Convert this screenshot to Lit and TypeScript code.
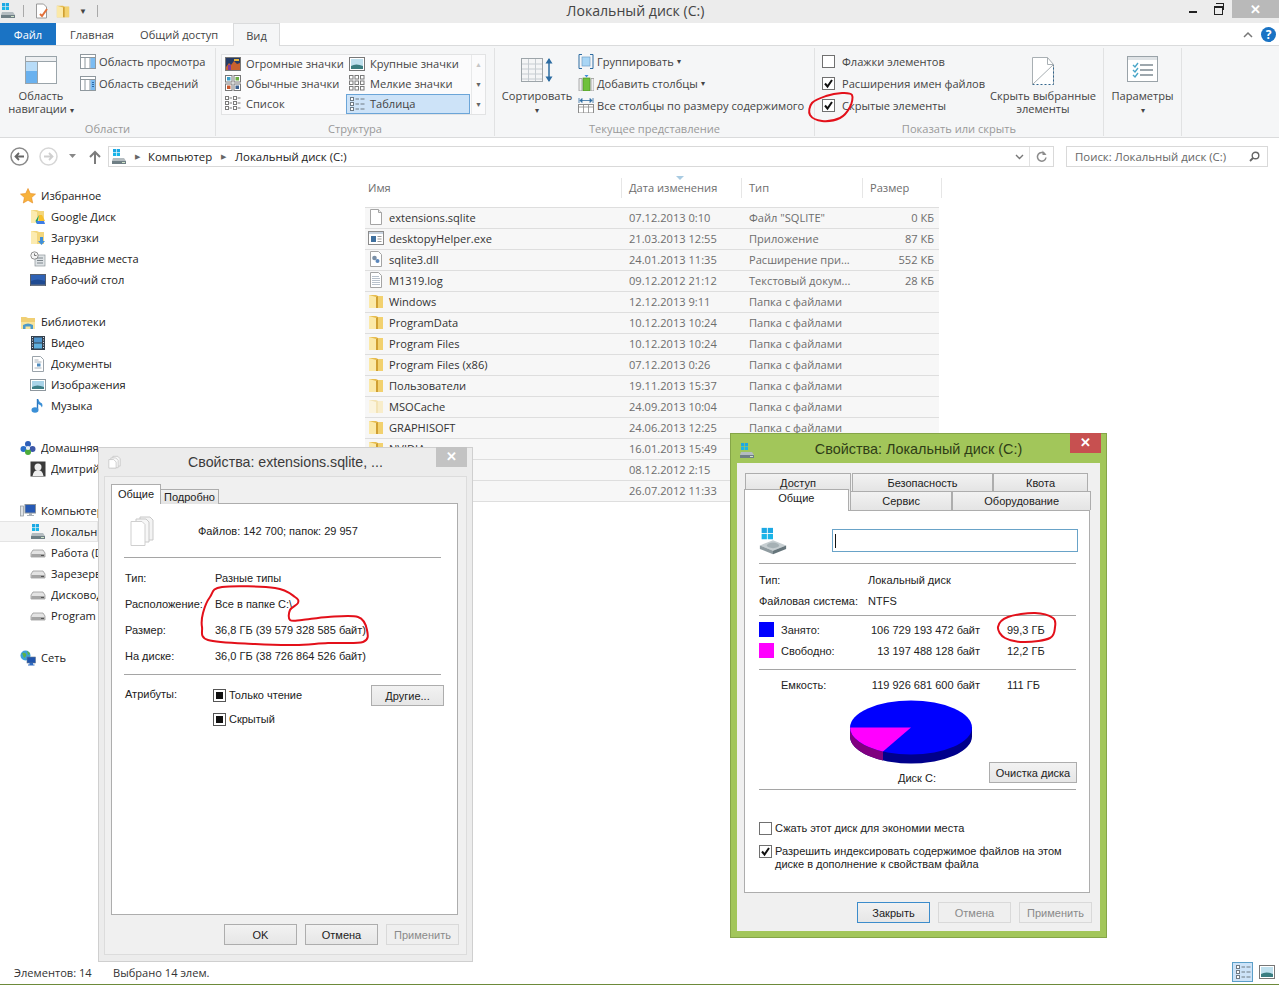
import { LitElement, html, css, svg } from "lit";
import { customElement } from "lit/decorators.js";

const smooth = (p: number[][]) => {
  const n = p.length;
  let d = `M${p[0][0]} ${p[0][1]}`;
  for (let i = 0; i < n; i++) {
    const a = p[(i - 1 + n) % n], b = p[i], c = p[(i + 1) % n], e = p[(i + 2) % n];
    d += `C${(b[0] + (c[0] - a[0]) / 6).toFixed(1)} ${(b[1] + (c[1] - a[1]) / 6).toFixed(1)} ${(c[0] - (e[0] - b[0]) / 6).toFixed(1)} ${(c[1] - (e[1] - b[1]) / 6).toFixed(1)} ${c[0]} ${c[1]}`;
  }
  return d + "Z";
};

const G: Record<string, any> = {
  drive: svg`<rect x="2" y="0" width="3.2" height="3.2" fill="#1ba8e4"/><rect x="5.8" y="0" width="3.2" height="3.2" fill="#1ba8e4"/><rect x="2" y="3.8" width="3.2" height="3.2" fill="#19b5e8"/><rect x="5.8" y="3.8" width="3.2" height="3.2" fill="#19b5e8"/><path d="M2 9h11l2 3v3H1v-3z" fill="#b4bcc0"/><rect x="1" y="12" width="14" height="3" fill="#6f7f85"/><rect x="11" y="13" width="3" height="1" fill="#cfe4c8"/>`,
  drivebig: svg`<rect x="1.500" y=".5" width="3" height="3" fill="#1ba8e4"/><rect x="5" y=".5" width="3" height="3" fill="#1ba8e4"/><rect x="1.500" y="4" width="3" height="3" fill="#19b5e8"/><rect x="5" y="4" width="3" height="3" fill="#19b5e8"/><path d="M.5 10.500L8 7.500 15.500 10.500 8 13.500z" fill="#c6ced1"/><path d="M.5 10.500L8 13.500v2L.5 12.500z" fill="#8f9ba0"/><path d="M15.500 10.500L8 13.500v2l7.500-3z" fill="#66757b"/><ellipse cx="8" cy="10.500" rx="3.500" ry="1.600" fill="#a6b1b5"/>`,
  hdd: svg`<path d="M3 5h10l2 3v4H1V8z" fill="#e3e3e3" stroke="#8d8d8d" stroke-width=".7"/><rect x="1.400" y="9" width="13.200" height="3" fill="#a5a5a5"/><rect x="11" y="10" width="3" height="1" fill="#555"/>`,
  doccheck: svg`<path d="M2.500 1h7l3 3v11h-10z" fill="#fff" stroke="#9a9a9a"/><path d="M6 11l2 2 5-7" fill="none" stroke="#e2703a" stroke-width="2"/>`,
  folder: svg`<path d="M1 2h7l2 1h5v12H1z" fill="#e7bd50"/><path d="M1 2l7 2v11H1z" fill="#fbe9a8"/><path d="M8 4l2-1v12H8z" fill="#cf9f32"/><rect x="10" y="3" width="5" height="12" fill="#f2d16f"/>`,
  folderfade: svg`<path d="M1 2h7l2 1h5v12H1z" fill="#f3e3b5"/><path d="M1 2l7 2v11H1z" fill="#fbf4de"/><rect x="10" y="3" width="5" height="12" fill="#f8edcb"/>`,
  file: svg`<path d="M2.500 .5h8l3 3v12h-11z" fill="#fff" stroke="#a4a4a4"/><path d="M10.500 .5v3h3" fill="#eee" stroke="#a4a4a4"/>`,
  exe: svg`<rect x=".5" y="1.500" width="15" height="13" fill="#fff" stroke="#8b8b8b"/><rect x="1" y="2" width="14" height="2" fill="#c9d4e0"/><rect x="3" y="6" width="5" height="6" fill="#3e6f9e"/><path d="M9.500 6.500h4M9.500 9h4M9.500 11.500h4" stroke="#999"/>`,
  dll: svg`<path d="M2.500 .5h8l3 3v12h-11z" fill="#fff" stroke="#a4a4a4"/><circle cx="6.500" cy="7" r="2.300" fill="#7a8fa6"/><circle cx="9.500" cy="10" r="2" fill="#5a86bb"/>`,
  log: svg`<path d="M2.500 .5h8l3 3v12h-11z" fill="#fff" stroke="#a4a4a4"/><path d="M4 4.500h7M4 6.500h8M4 8.500h8M4 10.500h8M4 12.500h8" stroke="#b9c2cc"/>`,
  star: svg`<path d="M8 .5l2.300 5 5.200.6-3.900 3.500 1.100 5.400L8 12.300 3.300 15l1.100-5.400L.5 6.100l5.200-.6z" fill="#f7b23c" stroke="#e58a20" stroke-width=".6"/>`,
  gdrive: svg`<path d="M1 1h6l2 1h5v12H1z" fill="#f3d67c"/><path d="M1 1l6 2v11H1z" fill="#fcebb0"/><path d="M9 6h3l3 6H9z" fill="#f6c02c"/><path d="M9 6l-3.500 6 1.500 3z" fill="#18a05e"/><path d="M7 15h8l-1-3H6z" fill="#3d7de6"/>`,
  download: svg`<path d="M1 1h6l2 1h5v12H1z" fill="#f3d67c"/><path d="M1 1l6 2v11H1z" fill="#fcebb0"/><path d="M10 7h3v4h2l-3.500 4L8 11h2z" fill="#3f8fd8"/>`,
  recent: svg`<rect x="5" y="4" width="10" height="11" fill="#dfe3e6" stroke="#8d9499" stroke-width=".7"/><path d="M7 7h6M7 9.500h6M7 12h6" stroke="#7d868c"/><circle cx="4.500" cy="4.500" r="3.700" fill="#f4f4f4" stroke="#777" stroke-width=".8"/><path d="M4.500 2.500v2h2" fill="none" stroke="#555" stroke-width=".8"/>`,
  desktop: svg`<rect x=".5" y="2.500" width="15" height="11" fill="#2f62b5" stroke="#555e6c"/><path d="M1 9q6-3 14 0v4H1z" fill="#1f4b92"/><rect x="1" y="12.500" width="14" height="1.500" fill="#6a7483"/>`,
  library: svg`<path d="M1 3h5l2 1h7v11H1z" fill="#f0cf74"/><path d="M1 8h14v7H1z" fill="#f8e49d"/><path d="M3 15v-4q5-3 10 0v4h-2.500v-2.500h-5V15z" fill="#4d9ac9"/>`,
  video: svg`<rect x="1" y="1" width="14" height="14" fill="#33414e"/><rect x="4" y="2.500" width="8" height="5" fill="#4e94cc"/><rect x="4" y="8.500" width="8" height="5" fill="#5fb0de"/><path d="M2 2.500h1M2 5h1M2 7.500h1M2 10h1M2 12.500h1M13 2.500h1M13 5h1M13 7.500h1M13 10h1M13 12.500h1" stroke="#dde"/>`,
  docs: svg`<path d="M2.500 .5h8l3 3v12h-11z" fill="#fff" stroke="#9aa3aa"/><path d="M4.500 4h4M4.500 6h7M4.500 12h7" stroke="#aab3ba"/><rect x="7" y="7.500" width="3.500" height="3" fill="#4f8bbd"/>`,
  images: svg`<rect x=".5" y="2.500" width="15" height="11" fill="#fff" stroke="#8e979e"/><rect x="2" y="4" width="12" height="8" fill="#a9d3e8"/><path d="M2 10q5-3 12 0v2H2z" fill="#3c7e86"/>`,
  music: svg`<path d="M7.500 1v10.500" stroke="#2c78c0" stroke-width="1.400"/><ellipse cx="5" cy="12" rx="3.500" ry="2.800" fill="#3a8fd6"/><path d="M8 1q1 3 4 4.500 1 1.500 0 4-1-3-4-3.500z" fill="#3a8fd6"/>`,
  home: svg`<circle cx="8" cy="4" r="3" fill="#2d5fb8"/><circle cx="3.500" cy="9" r="3" fill="#2a6fc9"/><circle cx="12.500" cy="9" r="3" fill="#3c57a8"/><circle cx="8" cy="12" r="3" fill="#4bab3a"/><circle cx="8" cy="8" r="2" fill="#e6eef6"/>`,
  user: svg`<rect x=".5" y=".5" width="15" height="15" fill="#3a3a3a"/><circle cx="8" cy="6" r="3.500" fill="#eee"/><path d="M2.500 15q1-6 5.500-6t5.500 6z" fill="#eee"/>`,
  computer: svg`<rect x="5" y="1.500" width="10.500" height="8.500" fill="#2659b5" stroke="#89939c"/><path d="M9 10h3v2h2v1H7v-1h2z" fill="#a9b1b8"/><rect x=".5" y="3" width="3" height="10" fill="#dfe3e6" stroke="#8b9298" stroke-width=".7"/>`,
  net: svg`<circle cx="5.500" cy="5.500" r="5" fill="#3ba0d8"/><path d="M2 3q3-1 4 1t-2 4zM7 1q3 1 3 3L8 5z" fill="#5cb24a"/><rect x="7" y="7" width="8.500" height="6" fill="#1f54ad" stroke="#687b8f" stroke-width=".6"/><path d="M9.500 13h3.500v1.500h1.500v1h-6.500v-1h1.500z" fill="#2f6bc2"/>`,
  navpane: svg`<rect x=".5" y=".5" width="31" height="27" fill="#fff" stroke="#9aa4aa"/><rect x="1" y="1" width="30" height="4.500" fill="#eef0f2"/><path d="M.5 5.500h31M12.500 5.500V27.500" stroke="#9aa4aa" fill="none"/><rect x="1" y="6" width="11" height="21" fill="#69b1ef"/><rect x="1" y="6" width="11" height="9" fill="#b8dcf8"/>`,
  preview: svg`<rect x=".5" y="1.500" width="15" height="14" fill="#fff" stroke="#8f989e"/><path d="M.5 4.500h15M5 4.500v11M10 4.500v11" stroke="#8f989e"/><rect x="10.500" y="5" width="4.500" height="10" fill="#7bbcf2"/>`,
  details: svg`<rect x=".5" y="1.500" width="15" height="14" fill="#fff" stroke="#8f989e"/><path d="M.5 4.500h15M5 4.500v11M10 4.500v11" stroke="#8f989e"/><rect x="10.500" y="5" width="4.500" height="10" fill="#7bbcf2"/><path d="M12 7.500h2M12 9.500h2M12 11.500h2" stroke="#2c6aa8"/>`,
  vhuge: svg`<rect x=".5" y="1.500" width="15" height="13" fill="#253a66" stroke="#777"/><path d="M1 11l3-4 2 2 3-4 3 3 3-1v7H1z" fill="#c8612f"/><rect x="3" y="9" width="3" height="5" fill="#7c3ba0"/><rect x="9" y="3" width="5" height="2" fill="#e7b73d"/>`,
  vlarge: svg`<rect x=".5" y="1.500" width="15" height="13" fill="#fff" stroke="#777"/><rect x="2" y="3" width="12" height="10" fill="#bfe0ee"/><path d="M2 10q5-3 12 0v3H2z" fill="#3a7d80"/>`,
  vmed: svg`<rect x=".5" y=".5" width="6.500" height="6.500" fill="#fff" stroke="#777"/><rect x="9" y=".5" width="6.500" height="6.500" fill="#fff" stroke="#777"/><rect x=".5" y="9" width="6.500" height="6.500" fill="#fff" stroke="#777"/><rect x="9" y="9" width="6.500" height="6.500" fill="#fff" stroke="#777"/><rect x="2" y="2" width="3.500" height="3.500" fill="#3b9ec9"/><rect x="10.500" y="2" width="3.500" height="3.500" fill="#6cae44"/><rect x="2" y="10.500" width="3.500" height="3.500" fill="#c9562a"/><rect x="10.500" y="10.500" width="3.500" height="3.500" fill="#3a5f8e"/>`,
  vsmall: svg`<g fill="#fff" stroke="#7b7b7b"><rect x=".5" y=".5" width="3.500" height="3.500"/><rect x="6" y=".5" width="3.500" height="3.500"/><rect x="11.500" y=".5" width="3.500" height="3.500"/><rect x=".5" y="6" width="3.500" height="3.500"/><rect x="6" y="6" width="3.500" height="3.500"/><rect x="11.500" y="6" width="3.500" height="3.500"/><rect x=".5" y="11.500" width="3.500" height="3.500"/><rect x="6" y="11.500" width="3.500" height="3.500"/><rect x="11.500" y="11.500" width="3.500" height="3.500"/></g>`,
  vlist: svg`<g fill="#fff" stroke="#7b7b7b"><rect x=".5" y="1.500" width="3" height="3"/><rect x=".5" y="6.500" width="3" height="3"/><rect x=".5" y="11.500" width="3" height="3"/><rect x="8.500" y="1.500" width="3" height="3"/><rect x="8.500" y="6.500" width="3" height="3"/><rect x="8.500" y="11.500" width="3" height="3"/></g><path d="M4.500 3h2.500M4.500 8h2.500M4.500 13h2.500M12.500 3h3M12.500 8h3M12.500 13h3" stroke="#7b7b7b"/>`,
  vtable: svg`<g fill="#fff" stroke="#6f7a83"><rect x="1.500" y="1.500" width="3" height="3"/><rect x="1.500" y="6.500" width="3" height="3"/><rect x="1.500" y="11.500" width="3" height="3"/></g><path d="M6.500 3h3.500M11.500 3h4M6.500 8h3.500M11.500 8h4M6.500 13h3.500M11.500 13h4" stroke="#6f7a83"/>`,
  sort: svg`<rect x=".5" y="2.500" width="21" height="23" fill="#f4f5f6" stroke="#9ca4a9"/><path d="M1 8h20M1 13h20M1 18h20M1 23h20M7.500 3v22M14.500 3v22" stroke="#c6ccd1"/><path d="M28 3v22" stroke="#2d6ca2" stroke-width="1.500"/><path d="M24.500 7.500L28 2l3.500 5.500zM24.500 20.500L28 26l3.500-5.500z" fill="#2d6ca2"/>`,
  group: svg`<path d="M4 1.500H1v14h3M12 1.500h3v14h-3" fill="none" stroke="#2d6ca2"/><rect x="4" y="4" width="8" height="9" fill="#a9d6f5" stroke="#6f9fc6" stroke-width=".7"/>`,
  addcol: svg`<rect x="5" y="3" width="7" height="13" fill="#6fc13b" stroke="#4b8f22" stroke-width=".7"/><path d="M1 3.500h3v12.500H1zM13 3.500h3v12.500h-3z" fill="#eee" stroke="#8c8c8c" stroke-width=".7"/><path d="M6.500 0h4L8.500 2.500z" fill="#3f8fd8"/>`,
  fitcol: svg`<path d="M1 1v5M15 1v5M2 3.500h12M2 3.500l2-2v4zM14 3.500l-2-2v4z" stroke="#2d6ca2" fill="#2d6ca2" stroke-width=".8"/><rect x=".5" y="7.500" width="15" height="8.500" fill="#fff" stroke="#8c8c8c"/><path d="M.5 10h15M5.500 7.500v8.500M10.500 7.500v8.500" stroke="#8c8c8c" stroke-width=".8"/>`,
  hide: svg`<path d="M1.500 27.500V.5h15l6 7v20" fill="#fff" stroke="#a8afb3"/><path d="M16.500 .5v7h6" fill="none" stroke="#a8afb3"/><path d="M1.500 27.500h21V8" fill="none" stroke="#33668e" stroke-dasharray="2 2"/><path d="M1.500 27.500L22 8" stroke="#a8afb3"/>`,
  params: svg`<rect x=".5" y=".5" width="30" height="25" fill="#fff" stroke="#9aa3a9"/><rect x="1" y="1" width="29" height="3" fill="#dfe3e6"/><path d="M13 9h13M13 14h13M13 19h13" stroke="#7e8a93" stroke-width="1.300"/><path d="M6 9l2 2 3-4M6 14l2 2 3-4M6 19l2 2 3-4" fill="none" stroke="#4aa6c8" stroke-width="1.400"/>`,
  stack: svg`<path d="M6 1h6l3 3v9H6z" fill="#f6f6f6" stroke="#c5c5c5"/><path d="M3.500 3h6l3 3v9h-9z" fill="#fafafa" stroke="#c5c5c5"/><path d="M1 5h6l3 3v7.500H1z" fill="#fff" stroke="#c5c5c5"/>`,
  stackbig: svg`<path d="M10 1h10l3 3v20H10z" fill="#f3f3f3" stroke="#c9c9c9"/><path d="M6 3h10l3 3v20H6z" fill="#f7f7f7" stroke="#c9c9c9"/><path d="M1 5.500h11l3 3v21H1z" fill="#fff" stroke="#cfcfcf"/>`,
};

const ic = (n: string, w = 16, h = 16, vb = "0 0 16 16") =>
  html`<svg class="ic" width=${w} height=${h} viewBox=${vb}>${G[n]}</svg>`;

const files = [
  ["file", "extensions.sqlite", "07.12.2013 0:10", 'Файл "SQLITE"', "0 КБ"],
  ["exe", "desktopyHelper.exe", "21.03.2013 12:55", "Приложение", "87 КБ"],
  ["dll", "sqlite3.dll", "24.01.2013 11:35", "Расширение при...", "552 КБ"],
  ["log", "M1319.log", "09.12.2012 21:12", "Текстовый докум...", "28 КБ"],
  ["folder", "Windows", "12.12.2013 9:11", "Папка с файлами", ""],
  ["folder", "ProgramData", "10.12.2013 10:24", "Папка с файлами", ""],
  ["folder", "Program Files", "10.12.2013 10:24", "Папка с файлами", ""],
  ["folder", "Program Files (x86)", "07.12.2013 0:26", "Папка с файлами", ""],
  ["folder", "Пользователи", "19.11.2013 15:37", "Папка с файлами", ""],
  ["folderfade", "MSOCache", "24.09.2013 10:04", "Папка с файлами", ""],
  ["folder", "GRAPHISOFT", "24.06.2013 12:25", "Папка с файлами", ""],
  ["folder", "NVIDIA", "16.01.2013 15:49", "", ""],
  ["", "", "08.12.2012 2:15", "", ""],
  ["", "", "26.07.2012 11:33", "", ""],
];

const nav: [string, string, number, boolean?][][] = [
  [["star", "Избранное", 0], ["gdrive", "Google Диск", 1], ["download", "Загрузки", 1], ["recent", "Недавние места", 1], ["desktop", "Рабочий стол", 1]],
  [["library", "Библиотеки", 0], ["video", "Видео", 1], ["docs", "Документы", 1], ["images", "Изображения", 1], ["music", "Музыка", 1]],
  [["home", "Домашняя группа", 0], ["user", "Дмитрий", 1]],
  [["computer", "Компьютер", 0], ["drive", "Локальный диск (C:)", 1, true], ["hdd", "Работа (D:)", 1], ["hdd", "Зарезервировано системой", 1], ["hdd", "Дисковод", 1], ["hdd", "Program Files", 1]],
  [["net", "Сеть", 0]],
];

const scribbles = [
  [[842,93],[826,96],[812,103],[810,115],[822,121],[840,118],[850,107],[852,95]],
  [[210,597],[222,587],[275,588],[295,597],[298,603],[290,610],[290,620],[302,620],[328,617],[358,617],[367,630],[363,642],[328,643],[295,645],[255,644],[208,640],[202,627],[203,613]],
  [[998,627],[1008,617],[1035,613],[1053,618],[1055,627],[1050,638],[1025,642],[1005,638]],
];

const check = (on: boolean, cls = "cb") =>
  html`<span class=${cls}>${on ? html`<svg width="13" height="13" viewBox="0 0 13 13"><path d="M3 6.500l2.500 3L10 3" fill="none" stroke="#111" stroke-width="2"/></svg>` : ""}</span>`;

@customElement("app-root")
export class AppRoot extends LitElement {
  static styles = css`
    :host { display: block; width: 1279px; height: 985px; position: relative; overflow: hidden; background: #fff;
      font-family: "Open Sans", "Noto Sans", sans-serif; font-size: 11.1px; color: #333; }
    .ic { display: block; flex: none; }
    .shell { display: flex; flex-direction: column; height: 985px; }
    .titlebar { display: grid; grid-template-columns: 1fr auto 1fr; height: 23px; background: #ececec; align-items: center; }
    .qa { display: flex; align-items: center; padding-bottom: 2px; }
    .qa .vs { width: 1px; height: 12px; background: #a9a9a9; }
    .ttl { font-size: 14.1px; color: #444; padding-right: 8px; padding-bottom: 2px; }
    .winbtns { display: flex; justify-content: flex-end; align-self: start; align-items: center; height: 18px; }
    .min { width: 8px; height: 2px; background: #222; margin-right: 17px; margin-top: 6px; }
    .rest { width: 7px; height: 6px; border: 1px solid #222; border-top-width: 2px; margin-right: 9px; margin-top: 2px; position: relative; }
    .rest::before { content: ""; position: absolute; left: 1px; top: -5px; width: 7px; height: 6px; border: 1px solid #222; border-bottom: 0; border-left: 0; }
    .close { width: 47px; height: 18px; background: #b9b9b9; color: #fff; text-align: center; line-height: 18px; font-size: 13px; font-weight: 700; }
    .tabs { display: flex; height: 23px; border-bottom: 1px solid #dadbdc; box-sizing: border-box; align-items: stretch; background: #fff; position: relative; }
    .tab { display: flex; align-items: center; color: #444; flex: none; }
    .tab.file { width: 56px; background: #1a73c4; color: #fff; justify-content: center; }
    .tab.view { width: 47px; justify-content: center; background: #f5f6f7; border: 1px solid #dadbdc; border-bottom: 0; box-sizing: border-box; height: 23px; }
    .tabs-r { margin-left: auto; display: flex; align-items: center; gap: 8px; padding-right: 3px; }
    .help { width: 15px; height: 15px; border-radius: 50%; background: #1a73c4; color: #fff; font-weight: 700; font-size: 12px; line-height: 15px; text-align: center; }
    .ribbon { display: flex; height: 92px; background: #f5f6f7; border-bottom: 1px solid #dadbdc; box-sizing: border-box; }
    .grp { display: flex; flex-direction: column; border-right: 1px solid #e1e2e3; box-sizing: border-box; height: 88px; margin-top: 2px; }
    .grp-c { display: flex; height: 75px; flex: none; }
    .grp-l { height: 13px; line-height: 11px; text-align: center; color: #999; }
    .big { display: flex; flex-direction: column; align-items: center; text-align: center; line-height: 13px; color: #444; box-sizing: border-box; }
    .big .lbl { white-space: nowrap; }
    .arrow { font-size: 8px; line-height: 8px; color: #444; }
    .col { display: flex; flex-direction: column; }
    .sm { display: flex; align-items: center; height: 22px; color: #444; white-space: nowrap; }
    .gallery { display: grid; grid-template-columns: 124px 124px 15px; grid-template-rows: 19px 20px 20px; width: 265px; height: 61px; margin: 6px 0 0 5px; border: 1px solid #e2e3e4; box-sizing: border-box; background: #fbfbfc; }
    .gi { display: flex; align-items: center; padding-left: 3px; padding-bottom: 2px; gap: 5px; color: #444; box-sizing: border-box; white-space: nowrap; }
    .gi.sel { background: #cde3f8; border: 1px solid #6ba5d8; padding-left: 2px; padding-bottom: 1px; }
    .gs { display: flex; align-items: center; justify-content: center; color: #666; font-size: 7px; grid-column: 3; border-left: 1px solid #e8e9ea; margin-left: 1px; }
    .gs.off { color: #c6c6c6; }
    .cb { width: 13px; height: 13px; border: 1px solid #707070; background: #fff; box-sizing: border-box; display: inline-flex; flex: none; position: relative; }
    .cb svg { position: absolute; left: -1px; top: -1px; }
    .navbar { display: flex; align-items: center; height: 37px; box-sizing: border-box; }
    .circ { width: 19px; height: 19px; flex: none; }
    .addr { display: flex; align-items: center; width: 946px; height: 21px; border: 1px solid #d9d9d9; box-sizing: border-box; color: #222; font-size: 11.4px; }
    .addr .tri { color: #666; font-size: 7px; width: 23px; text-align: center; }
    .addr-r { margin-left: auto; display: flex; align-items: center; height: 100%; }
    .search { display: flex; align-items: center; width: 202px; height: 21px; border: 1px solid #d9d9d9; box-sizing: border-box; margin-left: 12px; padding-left: 8px; color: #666; font-size: 11.4px; justify-content: space-between; padding-right: 7px; }
    .main { display: flex; flex: 1; min-height: 0; }
    .side { width: 358px; flex: none; padding-top: 10px; box-sizing: border-box; }
    .sg { margin-bottom: 21px; }
    .si { display: flex; align-items: center; height: 21px; gap: 5px; color: #222; white-space: nowrap; box-sizing: border-box; padding-left: 20px; overflow: hidden; }
    .si span { min-width: 0; overflow: hidden; }
    .si.ch { padding-left: 30px; }
    .sg.clip .si { width: 98px; }
    .si.sel { background: #f5f5f5; border: 1px solid #e4e4e4; border-left: 0; padding-left: 30px; }
    .list { flex: 1; }
    .hdr { display: grid; grid-template-columns: 264px 120px 121px 79px; height: 20px; margin-top: 3px; margin-bottom: 9px; color: #6d6d6d; align-items: center; position: relative; }
    .hdr > div { border-right: 1px solid #e6e6e6; height: 100%; display: flex; align-items: center; padding-left: 7px; padding-bottom: 1px; box-sizing: border-box; position: relative; }
    .hdr > div:first-child { padding-left: 10px; }
    .sorttri { position: absolute; left: 54px; top: -2px; width: 0; height: 0; border: 4px solid transparent; border-top: 4px solid #a9cbe2; border-bottom: 0; }
    .row { display: grid; grid-template-columns: 257px 120px 121px 71px; margin-left: 7px; width: 574px; height: 21px; background: #f7f7f7; border-top: 1px solid #dedede; box-sizing: border-box; align-items: center; color: #6d6d6d; padding-bottom: 2px; }
    .row:last-child { border-bottom: 1px solid #dedede; height: 22px; }
    .row .n { display: flex; align-items: center; gap: 5px; padding-left: 3px; color: #333; }
    .row .d { padding-left: 7px; }
    .row .t { padding-left: 7px; }
    .row .s { text-align: right; }
    .status { display: flex; align-items: center; height: 22px; color: #333; position: relative; padding-bottom: 2px; box-sizing: border-box; }
    .status .c1 { width: 113px; padding-left: 14px; box-sizing: border-box; }
    .status .r { margin-left: auto; display: flex; align-items: center; padding-right: 2px; gap: 3px; }
    .vbtn { width: 21px; height: 20px; display: flex; align-items: center; justify-content: center; box-sizing: border-box; }
    .vbtn.on { background: #cde3f8; border: 1px solid #5b9fc8; }
    .green { height: 1px; background: #6d8a3a; }

    .dlg { position: absolute; box-sizing: border-box; display: flex; flex-direction: column; color: #222; }
    .dlg.a { left: 98px; top: 447px; width: 375px; height: 515px; background: #ececec; border: 1px solid #cfcfcf; }
    .dlg.b { left: 730px; top: 433px; width: 377px; height: 505px; background: #a2c65a; border: 1px solid #85a548; }
    .dt { height: 28px; display: flex; align-items: center; flex: none; font-family: "Liberation Sans", sans-serif; font-size: 14.2px; color: #3b3b3b; position: relative; }
    .dlg.b .dt { height: 29px; color: #2f3d17; font-size: 14.4px; }
    .dt .tx { width: 100%; text-align: center; }
    .dt .ti { position: absolute; left: 9px; top: 7px; }
    .dlg.b .dt .ti { top: 9px; left: 8px; }
    .dx { position: absolute; right: 5px; top: -1px; width: 31px; height: 20px; background: #c3c3c3; color: #fff; text-align: center; line-height: 19px; font-size: 13px; font-weight: 700; font-family: "Liberation Sans", sans-serif; }
    .dlg.b .dx { background: #c75050; right: 5px; font-size: 13px; }
    .dbody { flex: 1; margin: 0 5px 6px; background: #f0f0f0; border: 1px solid #dcdcdc; padding: 8px 7px 0 6px; box-sizing: border-box; display: flex; flex-direction: column; font-family: "Liberation Sans", sans-serif; font-size: 11px; }
    .dlg.b .dbody { margin: 0 6px 6px; border: 0; padding: 10px 9px 0 7px; background: #f0f0f0; }
    .dtabs { display: flex; height: 19px; align-items: flex-end; position: relative; z-index: 1; margin-bottom: -1px; }
    .dtab { box-sizing: border-box; display: flex; align-items: center; justify-content: center; border: 1px solid #adadad; border-bottom: 0; background: linear-gradient(#f2f2f2, #e4e4e4); margin-left: -1px; line-height: 12px; }
    .dtab.on { background: #fff; height: 20px; margin-left: 0; padding-bottom: 2px; }
    .panel { background: #fff; border: 1px solid #adadad; box-sizing: border-box; }
    .a .panel { width: 347px; height: 412px; padding: 0 13px; }
    .b .panel { width: 346px; height: 383px; padding: 18px 12px 0 14px; }
    .sep { height: 1px; background: #a5a5a5; }
    .a .sep { margin: 0 3px 0 -1px; }
    .filesum { display: flex; align-items: center; height: 53px; padding-left: 5px; box-sizing: border-box; padding-top: 1px; }
    .filesum .t { margin-left: 44px; }
    .kv { display: flex; align-items: center; height: 26px; }
    .kv .k { width: 90px; flex: none; }
    .blocks { padding-top: 7px; padding-bottom: 5px; }
    .attrs { display: flex; padding-top: 10px; }
    .attrs .k { width: 88px; padding-top: 3px; }
    .ats { display: flex; flex-direction: column; gap: 6px; padding-top: 1px; }
    .at { display: flex; align-items: center; gap: 3px; height: 18px; }
    .tri-cb { width: 13px; height: 13px; border: 1px solid #555; box-sizing: border-box; display: flex; align-items: center; justify-content: center; }
    .tri-cb i { display: block; width: 7px; height: 7px; background: #111; }
    .btn { box-sizing: border-box; width: 73px; height: 21px; border: 1px solid #adadad; background: linear-gradient(#f2f2f2, #e6e6e6); display: flex; align-items: center; justify-content: center; color: #222; }
    .btn.dis { border-color: #d9d9d9; background: #efefef; color: #8a8a8a; }
    .btn.def { border-color: #3c8ccb; background: linear-gradient(#f2f2f2, #e6e6e6); }
    .more { margin-left: auto; height: 21px; }
    .dbtns { display: flex; justify-content: flex-end; gap: 8px; margin-top: 9px; }
    .b .dbtns { margin-right: -1px; }
    .tabrow { display: flex; height: 18px; position: relative; }
    .tabrow .dtab { height: 100%; }
    .tabrow.r1 { margin-left: 2px; }
    .tabrow.r2 { height: 19px; position: relative; }
    .tabrow.r2 .dtab.on { height: 22px; margin-top: -2px; z-index: 2; padding-bottom: 6px; }
    .drv { display: flex; align-items: flex-start; height: 23px; }
    .drv .ic { margin-top: -2px; }
    .inp { margin-left: 45px; width: 246px; height: 23px; box-sizing: border-box; border: 1px solid #69a3c8; display: flex; align-items: center; padding-left: 2px; flex: none; }
    .inp i { display: block; width: 1px; height: 14px; background: #111; }
    .b .sep { width: 317px; }
    .info { height: 21px; display: flex; align-items: center; padding-bottom: 2px; box-sizing: border-box; }
    .info .k { width: 109px; flex: none; }
    .us { display: grid; grid-template-columns: 22px 70px 129px 96px; height: 21px; align-items: center; padding-bottom: 2px; box-sizing: border-box; }
    .sw { width: 15px; height: 15px; }
    .us .v { text-align: right; }
    .us .g { padding-left: 27px; }
    .pie { display: block; margin: 4px 0 0 90px; }
    .pierow { display: flex; margin-top: -2px; height: 21px; }
    .pierow .lb { width: 230px; padding-left: 139px; box-sizing: border-box; padding-top: 10px; }
    .pierow .btn { width: 88px; }
    .ck { display: flex; align-items: flex-start; gap: 3px; line-height: 13px; }
    .over { position: absolute; left: 0; top: 0; pointer-events: none; }
  `;

  render() {
    return html`
      <div class="shell">
        <div class="titlebar">
          <div class="qa">
            <span>${ic("drive")}</span>
            <span class="vs" style="margin:0 10px 0 7px"></span>
            ${ic("doccheck")}
            <span style="margin-left:6px">${ic("folder", 14, 16)}</span>
            <span class="arrow" style="margin:0 10px 0 9px">▼</span>
            <span class="vs"></span>
          </div>
          <div class="ttl">Локальный диск (C:)</div>
          <div class="winbtns"><span class="min"></span><span class="rest"></span><span class="close">✕</span></div>
        </div>
        <div class="tabs">
          <div class="tab file">Файл</div>
          <div class="tab" style="margin-left:14px;width:70px">Главная</div>
          <div class="tab" style="width:93px">Общий доступ</div>
          <div class="tab view">Вид</div>
          <div class="tabs-r"><svg width="10" height="7" viewBox="0 0 10 7"><path d="M1 6l4-4 4 4" fill="none" stroke="#777" stroke-width="1.500"/></svg><span class="help">?</span></div>
        </div>
        <div class="ribbon">
          <div class="grp" style="width:216px">
            <div class="grp-c">
              <div class="big" style="width:68px;margin-left:7px;padding-top:8px">
                ${ic("navpane", 32, 28, "0 0 32 28")}
                <div class="lbl" style="margin-top:5px">Область<br />навигации <span class="arrow">▾</span></div>
              </div>
              <div class="col" style="margin-left:5px;padding-top:2px">
                <div class="sm" style="gap:3px">${ic("preview")}Область просмотра</div>
                <div class="sm" style="gap:3px">${ic("details")}Область сведений</div>
              </div>
            </div>
            <div class="grp-l">Области</div>
          </div>
          <div class="grp" style="width:279px">
            <div class="grp-c">
              <div class="gallery">
                <div class="gi">${ic("vhuge")}Огромные значки</div>
                <div class="gi">${ic("vlarge")}Крупные значки</div>
                <div class="gs off">▲</div>
                <div class="gi">${ic("vmed")}Обычные значки</div>
                <div class="gi">${ic("vsmall")}Мелкие значки</div>
                <div class="gs">▼</div>
                <div class="gi">${ic("vlist")}Список</div>
                <div class="gi sel">${ic("vtable")}Таблица</div>
                <div class="gs">▼</div>
              </div>
            </div>
            <div class="grp-l">Структура</div>
          </div>
          <div class="grp" style="width:320px">
            <div class="grp-c">
              <div class="big" style="width:76px;margin-left:4px;padding-top:8px">
                ${ic("sort", 33, 28, "0 0 33 28")}
                <div class="lbl" style="margin-top:5px">Сортировать<br /><span class="arrow">▾</span></div>
              </div>
              <div class="col" style="margin-left:3px;padding-top:2px">
                <div class="sm" style="gap:3px">${ic("group")}Группировать <span class="arrow">▾</span></div>
                <div class="sm" style="gap:3px">${ic("addcol")}Добавить столбцы <span class="arrow">▾</span></div>
                <div class="sm" style="gap:3px">${ic("fitcol")}Все столбцы по размеру содержимого</div>
              </div>
            </div>
            <div class="grp-l">Текущее представление</div>
          </div>
          <div class="grp" style="width:289px">
            <div class="grp-c">
              <div class="col" style="width:176px;padding:2px 0 0 7px;box-sizing:border-box">
                <div class="sm" style="gap:7px">${check(false)}Флажки элементов</div>
                <div class="sm" style="gap:7px">${check(true)}Расширения имен файлов</div>
                <div class="sm" style="gap:7px">${check(true)}Скрытые элементы</div>
              </div>
              <div class="big" style="width:104px;padding-top:9px">
                ${ic("hide", 24, 28, "0 0 24 28")}
                <div class="lbl" style="margin-top:4px">Скрыть выбранные<br />элементы</div>
              </div>
            </div>
            <div class="grp-l">Показать или скрыть</div>
          </div>
          <div class="grp" style="width:78px">
            <div class="grp-c">
              <div class="big" style="width:78px;padding-top:8px">
                ${ic("params", 31, 26, "0 0 31 26")}
                <div class="lbl" style="margin-top:7px">Параметры<br /><span class="arrow">▾</span></div>
              </div>
            </div>
            <div class="grp-l"></div>
          </div>
        </div>
        <div class="navbar">
          <svg class="circ" style="margin-left:10px" viewBox="0 0 19 19"><circle cx="9.500" cy="9.500" r="8.500" fill="none" stroke="#8a8a8a" stroke-width="1.500"/><path d="M14 9.500H6M9 6L5.500 9.500 9 13" fill="none" stroke="#666" stroke-width="1.800"/></svg>
          <svg class="circ" style="margin-left:10px" viewBox="0 0 19 19"><circle cx="9.500" cy="9.500" r="8.500" fill="none" stroke="#d6d6d6" stroke-width="1.500"/><path d="M5 9.500h8M10 6l3.500 3.500L10 13" fill="none" stroke="#cfcfcf" stroke-width="1.800"/></svg>
          <svg style="margin-left:10px;flex:none" width="9" height="5" viewBox="0 0 9 5"><path d="M1 0h7L4.500 4z" fill="#888"/></svg>
          <svg style="margin-left:12px;flex:none" width="12" height="14" viewBox="0 0 12 14"><path d="M6 14V2M1 7l5-5 5 5" fill="none" stroke="#7c7c7c" stroke-width="2"/></svg>
          <div class="addr" style="margin-left:7px">
            <span style="margin-left:2px">${ic("drive")}</span>
            <span class="tri" style="width:21px">▶</span>Компьютер<span class="tri">▶</span>Локальный диск (C:)
            <div class="addr-r">
              <svg width="9" height="6" viewBox="0 0 9 6"><path d="M1 1l3.500 3.500L8 1" fill="none" stroke="#777" stroke-width="1.400"/></svg>
              <span style="width:1px;height:100%;background:#e2e2e2;margin:0 3px 0 5px"></span>
              <svg style="margin:0 6px 0 3px" width="11" height="13" viewBox="0 0 11 13"><path d="M9 4a4.300 4.300 0 1 0 1 3.500" fill="none" stroke="#8c8c8c" stroke-width="1.500"/><path d="M6.500 .5v4.500h4z" fill="#8c8c8c"/></svg>
            </div>
          </div>
          <div class="search">Поиск: Локальный диск (C:)
            <svg width="11" height="11" viewBox="0 0 11 11"><circle cx="6.500" cy="4.500" r="3.300" fill="none" stroke="#666" stroke-width="1.400"/><path d="M4 7l-3 3" stroke="#666" stroke-width="1.800"/></svg>
          </div>
        </div>
        <div class="main">
          <div class="side">
            ${nav.map((g, gi) => html`<div class="sg ${gi >= 2 ? "clip" : ""}">${g.map(([i, t, ch, sel]) => html`
              <div class="si ${ch ? "ch" : ""} ${sel ? "sel" : ""}">${ic(i)}<span>${t}</span></div>`)}</div>`)}
          </div>
          <div class="list">
            <div class="hdr">
              <div>Имя</div>
              <div><span class="sorttri"></span>Дата изменения</div>
              <div>Тип</div>
              <div>Размер</div>
            </div>
            ${files.map((f) => html`<div class="row">
              <div class="n">${f[0] ? ic(f[0]) : ""}<span>${f[1]}</span></div>
              <div class="d">${f[2]}</div>
              <div class="t">${f[3]}</div>
              <div class="s">${f[4]}</div>
            </div>`)}
          </div>
        </div>
        <div class="status">
          <div class="c1">Элементов: 14</div>
          <div>Выбрано 14 элем.</div>
          <div class="r">
            <div class="vbtn on">${ic("vtable")}</div>
            <div class="vbtn">${ic("vlarge")}</div>
          </div>
        </div>
        <div class="green"></div>
      </div>

      <div class="dlg a">
        <div class="dt"><span class="ti">${ic("stack", 13, 14)}</span><span class="tx">Свойства: extensions.sqlite, ...</span><span class="dx">✕</span></div>
        <div class="dbody">
          <div class="dtabs">
            <div class="dtab on" style="width:50px">Общие</div>
            <div class="dtab" style="width:59px;height:15px">Подробно</div>
          </div>
          <div class="panel">
            <div class="filesum">${ic("stackbig", 24, 31, "0 0 24 31")}<div class="t">Файлов: 142 700; папок: 29 957</div></div>
            <div class="sep"></div>
            <div class="blocks">
              <div class="kv"><span class="k">Тип:</span>Разные типы</div>
              <div class="kv"><span class="k">Расположение:</span>Все в папке C:\\</div>
              <div class="kv"><span class="k">Размер:</span>36,8 ГБ (39 579 328 585 байт)</div>
              <div class="kv"><span class="k">На диске:</span>36,0 ГБ (38 726 864 526 байт)</div>
            </div>
            <div class="sep"></div>
            <div class="attrs">
              <div class="k">Атрибуты:</div>
              <div class="ats">
                <div class="at"><span class="tri-cb"><i></i></span>Только чтение</div>
                <div class="at"><span class="tri-cb"><i></i></span>Скрытый</div>
              </div>
              <div class="btn more">Другие...</div>
            </div>
          </div>
          <div class="dbtns">
            <div class="btn">OK</div>
            <div class="btn">Отмена</div>
            <div class="btn dis">Применить</div>
          </div>
        </div>
      </div>

      <div class="dlg b">
        <div class="dt"><span class="ti">${ic("drive")}</span><span class="tx">Свойства: Локальный диск (C:)</span><span class="dx">✕</span></div>
        <div class="dbody">
          <div class="tabrow r1">
            <div class="dtab" style="width:106px">Доступ</div>
            <div class="dtab" style="width:141px;margin-left:1px">Безопасность</div>
            <div class="dtab" style="width:95px;margin-left:0">Квота</div>
          </div>
          <div class="tabrow r2">
            <div class="dtab on" style="width:105px">Общие</div>
            <div class="dtab" style="width:103px;margin-left:1px">Сервис</div>
            <div class="dtab" style="width:139px;margin-left:0">Оборудование</div>
          </div>
          <div class="panel">
            <div class="drv">${ic("drivebig", 28, 28)}<div class="inp"><i></i></div></div>
            <div class="sep" style="margin-top:11px"></div>
            <div style="padding:6px 0 3px">
              <div class="info"><span class="k">Тип:</span>Локальный диск</div>
              <div class="info"><span class="k">Файловая система:</span>NTFS</div>
            </div>
            <div class="sep"></div>
            <div style="padding:4px 0 7px">
              <div class="us"><span class="sw" style="background:#0000ff"></span><span>Занято:</span><span class="v">106 729 193 472 байт</span><span class="g">99,3 ГБ</span></div>
              <div class="us"><span class="sw" style="background:#ff00ff"></span><span>Свободно:</span><span class="v">13 197 488 128 байт</span><span class="g">12,2 ГБ</span></div>
            </div>
            <div class="sep"></div>
            <div class="us" style="margin-top:5px"><span></span><span>Емкость:</span><span class="v">119 926 681 600 байт</span><span class="g">111 ГБ</span></div>
            <svg class="pie" width="124" height="64" viewBox="0 0 124 64">
              <path d="M1 27.500v9a61 27 0 0 0 122 0v-9z" fill="#00008b"/>
              <path d="M1 27.500v9A61 27 0 0 0 34 60.500V51.500A61 27 0 0 1 1 27.500z" fill="#800080"/>
              <ellipse cx="62" cy="27.500" rx="61" ry="27" fill="#0000ff"/>
              <path d="M62 27.500H1A61 27 0 0 0 34 51.500z" fill="#ff00ff"/>
            </svg>
            <div class="pierow"><div class="lb">Диск C:</div><div class="btn">Очистка диска</div></div>
            <div class="sep" style="margin-top:6px"></div>
            <div class="ck" style="margin-top:32px">${check(false)}<span>Сжать этот диск для экономии места</span></div>
            <div class="ck" style="margin-top:10px">${check(true)}<span>Разрешить индексировать содержимое файлов на этом<br />диске в дополнение к свойствам файла</span></div>
          </div>
          <div class="dbtns">
            <div class="btn def">Закрыть</div>
            <div class="btn dis">Отмена</div>
            <div class="btn dis">Применить</div>
          </div>
        </div>
      </div>

      <svg class="over" width="1279" height="985" viewBox="0 0 1279 985">
        ${scribbles.map((p) => svg`<path d=${smooth(p)} fill="none" stroke="#e3101a" stroke-width="2"/>`)}
      </svg>
    `;
  }
}
